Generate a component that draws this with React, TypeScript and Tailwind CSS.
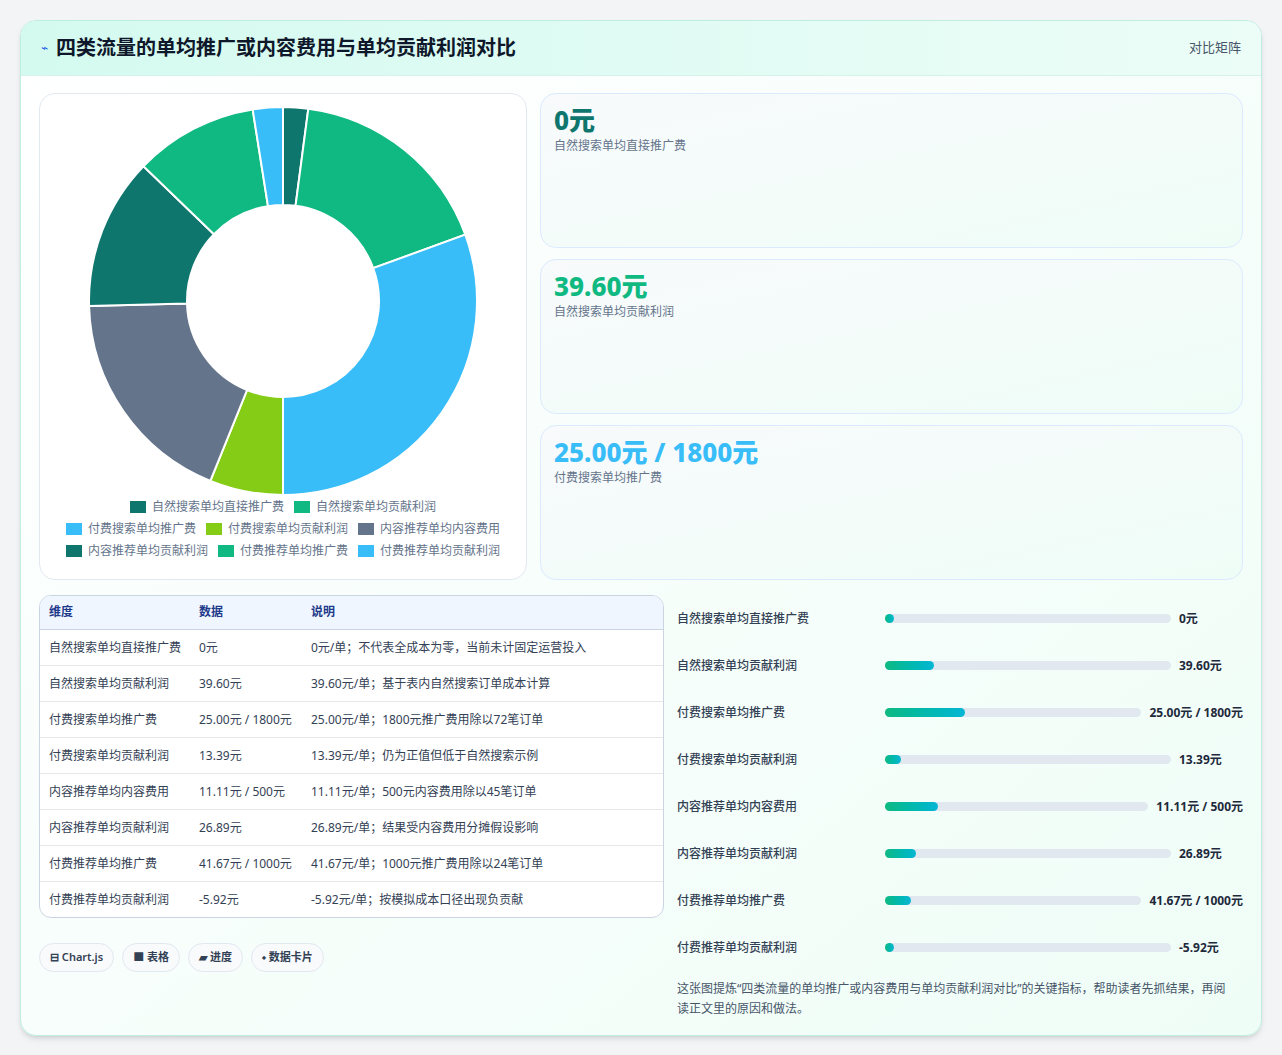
import React from "react";

const F = { fontFamily: '"Noto Sans","Noto Sans CJK SC",sans-serif' };

const slices = [
  { a: 7.5, c: "#0f766e" },
  { a: 62.5, c: "#10b981" },
  { a: 110, c: "#38bdf8" },
  { a: 22, c: "#84cc16" },
  { a: 66.5, c: "#64748b" },
  { a: 45.5, c: "#0f766e" },
  { a: 37, c: "#10b981" },
  { a: 9, c: "#38bdf8" },
];

function Donut() {
  const R = 194, r = 96, cx = 200, cy = 200;
  let start = 0;
  const pt = (ang: number, rad: number) => {
    const t = (ang * Math.PI) / 180;
    return [cx + rad * Math.sin(t), cy - rad * Math.cos(t)];
  };
  return (
    <svg width="400" height="400" viewBox="0 0 400 400">
      {slices.map((s, i) => {
        const e = start + s.a;
        const [x1, y1] = pt(start, R), [x2, y2] = pt(e, R), [x3, y3] = pt(e, r), [x4, y4] = pt(start, r);
        const lg = s.a > 180 ? 1 : 0;
        const d = `M${x1} ${y1} A${R} ${R} 0 ${lg} 1 ${x2} ${y2} L${x3} ${y3} A${r} ${r} 0 ${lg} 0 ${x4} ${y4}Z`;
        start = e;
        return <path key={i} d={d} fill={s.c} stroke="#fff" strokeWidth="2" />;
      })}
    </svg>
  );
}

const legend = [
  [["#0f766e", "自然搜索单均直接推广费"], ["#10b981", "自然搜索单均贡献利润"]],
  [["#38bdf8", "付费搜索单均推广费"], ["#84cc16", "付费搜索单均贡献利润"], ["#64748b", "内容推荐单均内容费用"]],
  [["#0f766e", "内容推荐单均贡献利润"], ["#10b981", "付费推荐单均推广费"], ["#38bdf8", "付费推荐单均贡献利润"]],
];

const rows = [
  ["自然搜索单均直接推广费", "0元", "0元/单；不代表全成本为零，当前未计固定运营投入"],
  ["自然搜索单均贡献利润", "39.60元", "39.60元/单；基于表内自然搜索订单成本计算"],
  ["付费搜索单均推广费", "25.00元 / 1800元", "25.00元/单；1800元推广费用除以72笔订单"],
  ["付费搜索单均贡献利润", "13.39元", "13.39元/单；仍为正值但低于自然搜索示例"],
  ["内容推荐单均内容费用", "11.11元 / 500元", "11.11元/单；500元内容费用除以45笔订单"],
  ["内容推荐单均贡献利润", "26.89元", "26.89元/单；结果受内容费用分摊假设影响"],
  ["付费推荐单均推广费", "41.67元 / 1000元", "41.67元/单；1000元推广费用除以24笔订单"],
  ["付费推荐单均贡献利润", "-5.92元", "-5.92元/单；按模拟成本口径出现负贡献"],
];
const fills = [0, 17, 31, 5.6, 20, 11, 10, 0];

export default function App() {
  return (
    <div style={F} className="min-h-[1055px] bg-[#f3f4f6] p-5">
      <div className="rounded-2xl border border-[#bfeee0] bg-gradient-to-br from-white to-[#effdf7] overflow-hidden shadow-md">
        <div className="h-[55px] flex items-center justify-between px-5 bg-gradient-to-r from-[#d4faf0] to-[#ecfdf7] border-b border-[#d5f3ea]">
          <div className="flex items-center gap-2">
            <span className="text-[#2563eb] text-xs">⌁</span>
            <span className="text-[20px] font-bold text-[#0f172a]">四类流量的单均推广或内容费用与单均贡献利润对比</span>
          </div>
          <span className="text-[13px] text-[#475569]">对比矩阵</span>
        </div>
        <div className="pl-[18px] pr-[18px] pt-[17px] pb-4">
          <div className="flex gap-[13px]">
            <div className="w-[488px] h-[487px] bg-white rounded-2xl border border-[#e2e8f0] flex flex-col items-center pt-[10px]">
              <div className="h-[400px] -mt-[3px]"><Donut /></div>
              <div className="flex flex-col items-center gap-[5px] -mt-[3px]">
                {legend.map((l, i) => (
                  <div key={i} className="flex gap-[10px]">
                    {l.map(([c, t]) => (
                      <div key={t} className="flex items-center gap-[6px] text-[12px] text-[#64748b] leading-[17px]">
                        <span className="w-[16px] h-[12px] inline-block" style={{ background: c }} />{t}
                      </div>
                    ))}
                  </div>
                ))}
              </div>
            </div>
            <div className="flex-1 flex flex-col gap-[11px]">
              {[["0元", "text-[#0f766e]", "自然搜索单均直接推广费"], ["39.60元", "text-[#10b981]", "自然搜索单均贡献利润"], ["25.00元 / 1800元", "text-[#38bdf8]", "付费搜索单均推广费"]].map(([v, c, l]) => (
                <div key={l} className="h-[155px] rounded-2xl border border-[#dbeafe] bg-gradient-to-br from-[#f8fafc] to-[#effdf7] px-[13px] pt-[9px]">
                  <div className={`text-[26px] font-extrabold leading-[34px] ${c}`}>{v}</div>
                  <div className="text-[12px] text-[#64748b]">{l}</div>
                </div>
              ))}
            </div>
          </div>
          <div className="flex gap-[13px] mt-[15px]">
            <div className="w-[625px]">
              <div className="rounded-xl border border-[#cbd5e1] overflow-hidden bg-white">
                <table className="w-full table-fixed text-[12px] text-[#334155]">
                  <thead>
                    <tr className="bg-[#eff6ff] text-[#1e3a8a] h-[33px] text-left border-b border-[#cbd5e1]">
                      <th className="font-semibold pl-[9px] w-[150px]">维度</th>
                      <th className="font-semibold w-[112px] pl-[9px]">数据</th>
                      <th className="font-semibold pl-[9px]">说明</th>
                    </tr>
                  </thead>
                  <tbody>
                    {rows.map((r) => (
                      <tr key={r[0]} className="border-b border-[#e5e7eb] last:border-0 align-top">
                        <td className="px-[9px] py-[9px] leading-[17px]">{r[0]}</td>
                        <td className="px-[9px] py-[9px] leading-[17px]">{r[1]}</td>
                        <td className="px-[9px] py-[9px] leading-[17px]">{r[2]}</td>
                      </tr>
                    ))}
                  </tbody>
                </table>
              </div>
              <div className="flex gap-2 mt-[25px]">
                {["⊟ Chart.js", "■ 表格", "▰ 进度", "⬩ 数据卡片"].map((t) => (
                  <span key={t} className="px-[10px] h-[29px] flex items-center rounded-full border border-[#e2e8f0] bg-[#f8fafc] text-[11px] font-semibold text-[#334155]">{t}</span>
                ))}
              </div>
            </div>
            <div className="flex-1 flex flex-col">
              {rows.map((r, i) => (
                <div key={r[0]} className="h-[47px] flex items-center text-[12px]">
                  <span className="w-[200px] shrink-0 text-[#334155] font-medium">{r[0]}</span>
                  <div className="flex-1 h-[9px] rounded-full bg-[#e2e8f0] mx-[8px] relative">
                    <div className="h-full rounded-full bg-gradient-to-r from-[#10b981] to-[#06b6d4]" style={{ width: `max(9px, ${fills[i]}%)` }} />
                  </div>
                  <span className="font-bold text-[#1e293b] min-w-[64px] whitespace-nowrap">{r[1]}</span>
                </div>
              ))}
              <p className="text-[12px] text-[#475569] leading-[20px] mt-[8px] pr-[16px]">这张图提炼“四类流量的单均推广或内容费用与单均贡献利润对比”的关键指标，帮助读者先抓结果，再阅读正文里的原因和做法。</p>
            </div>
          </div>
        </div>
      </div>
    </div>
  );
}
